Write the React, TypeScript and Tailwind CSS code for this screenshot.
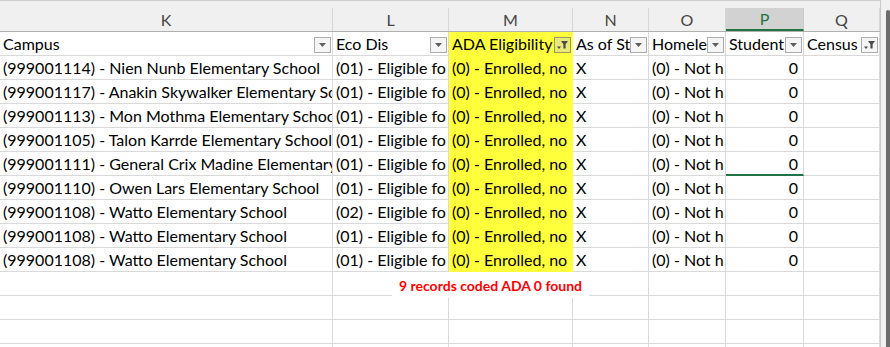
import React from 'react';

const GRID = 'grid grid-cols-[333px_116px_124px_76px_77px_78px_76px]';

type Row = {
  campus: string;
  eco: string;
};

const rows: Row[] = [
  { campus: '(999001114) - Nien Nunb Elementary School', eco: '(01) - Eligible fo' },
  { campus: '(999001117) - Anakin Skywalker Elementary School', eco: '(01) - Eligible fo' },
  { campus: '(999001113) - Mon Mothma Elementary School', eco: '(01) - Eligible fo' },
  { campus: '(999001105) - Talon Karrde Elementary School', eco: '(01) - Eligible fo' },
  { campus: '(999001111) - General Crix Madine Elementary School', eco: '(01) - Eligible fo' },
  { campus: '(999001110) - Owen Lars Elementary School', eco: '(01) - Eligible fo' },
  { campus: '(999001108) - Watto Elementary School', eco: '(02) - Eligible fo' },
  { campus: '(999001108) - Watto Elementary School', eco: '(01) - Eligible fo' },
  { campus: '(999001108) - Watto Elementary School', eco: '(01) - Eligible fo' },
];

function FilterButton({ filtered, yellow }: { filtered?: boolean; yellow?: boolean }) {
  return (
    <span
      className={`absolute right-[1px] top-[5px] w-[17px] h-[16px] border flex items-center justify-center ${
        yellow ? 'bg-[#e9e978] border-[#9a9a60]' : 'bg-[#f5f5f5] border-[#acacac]'
      }`}
    >
      {filtered ? (
        <svg width="13" height="10" viewBox="0 0 13 10">
          <path d="M5 1h7L9.6 4.2V8.5H7.4V4.2z" fill="#4a4a4a" />
          <path d="M1 6.5h4L3 9z" fill="#4a4a4a" />
        </svg>
      ) : (
        <svg width="7" height="4" viewBox="0 0 7 4">
          <path d="M0 0h7L3.5 4z" fill="#5f5f5f" />
        </svg>
      )}
    </span>
  );
}

function Cell({
  children,
  className = '',
}: {
  children?: React.ReactNode;
  className?: string;
}) {
  return (
    <div
      className={`relative h-[24px] border-r border-b overflow-hidden whitespace-nowrap px-[3px] leading-[23px] ${className}`}
    >
      {children}
    </div>
  );
}

const letters = ['K', 'L', 'M', 'N', 'O', 'P', 'Q'];

export default function App() {
  return (
    <div className="relative w-[890px] h-[347px] overflow-hidden bg-white flex items-start font-['Lato',sans-serif] text-[16px] text-black">
      <div className="w-[880px] shrink-0">
        {/* top strip */}
        <div className="h-[8px] bg-[#f0f0f0] border-t border-[#cdcdcd]" />

        {/* column letters */}
        <div className={`${GRID} h-[24px] bg-[#f0f0f0] border-b border-[#b0b0b0]`}>
          {letters.map((l) =>
            l === 'P' ? (
              <div
                key={l}
                className="h-[23px] bg-[#d2d2d2] border-b-2 border-[#217346] border-r border-r-[#c8c8c8] flex items-center justify-center text-[#217346] text-[16px]"
              >
                {l}
              </div>
            ) : (
              <div
                key={l}
                className="h-[23px] border-r border-[#d6d6d6] flex items-center justify-center text-[#444] text-[16px]"
              >
                {l}
              </div>
            )
          )}
        </div>

        {/* header row */}
        <div className={GRID}>
          <Cell className="border-[#d9d9d9]">
            Campus
            <FilterButton />
          </Cell>
          <Cell className="border-[#d9d9d9]">
            Eco Dis
            <FilterButton />
          </Cell>
          <Cell className="bg-[#ffff3c] border-[#ffff3c]">
            ADA Eligibility
            <FilterButton filtered yellow />
          </Cell>
          <Cell className="border-[#d9d9d9]">
            As of St
            <FilterButton />
          </Cell>
          <Cell className="border-[#d9d9d9]">
            Homele
            <FilterButton />
          </Cell>
          <Cell className="border-[#d9d9d9]">
            Student
            <FilterButton />
          </Cell>
          <Cell className="border-[#d9d9d9]">
            Census
            <FilterButton filtered />
          </Cell>
        </div>

        {/* data rows */}
        {rows.map((r, i) => (
          <div key={i} className={GRID}>
            <Cell className="border-[#d9d9d9]">{r.campus}</Cell>
            <Cell className="border-[#d9d9d9]">{r.eco}</Cell>
            <Cell className="bg-[#ffff3c] border-[#ffff3c]">(0) - Enrolled, no</Cell>
            <Cell className="border-[#d9d9d9]">X</Cell>
            <Cell className="border-[#d9d9d9]">(0) - Not h</Cell>
            <Cell
              className={`text-right pr-[5px] ${
                i === 4 ? 'border-r-[#d9d9d9] border-b-2 border-b-[#217346]' : 'border-[#d9d9d9]'
              }`}
            >
              0
            </Cell>
            <Cell className="border-[#d9d9d9]" />
          </div>
        ))}

        {/* empty rows */}
        {[0, 1, 2, 3].map((i) => (
          <div key={i} className={GRID}>
            {letters.map((l) => (
              <Cell key={l} className="border-[#d9d9d9]" />
            ))}
          </div>
        ))}
      </div>

      {/* vertical scrollbar */}
      <div className="w-[10px] h-[347px] shrink-0 bg-[#f1f1f1] border-l border-[#c9c9c9] pt-[10px] flex justify-end">
        <div className="w-[4px] h-full bg-[#6b6b6b] rounded-t-[2px]" />
      </div>

      {/* note box */}
      <div className="absolute left-[392px] top-[272px] w-[197px] h-[26px] bg-white flex items-center justify-center">
        <span className="text-[#ff0000] font-bold text-[14px] font-['Lato',sans-serif]">
          9 records coded ADA 0 found
        </span>
      </div>
    </div>
  );
}
